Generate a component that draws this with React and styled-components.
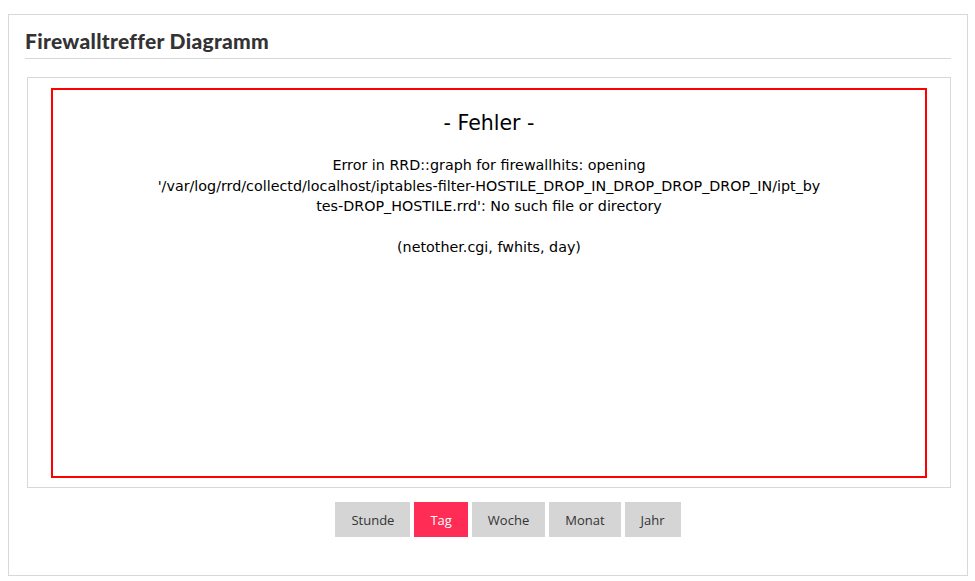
import styled, { createGlobalStyle } from "styled-components"

const ranges = ["Stunde", "Tag", "Woche", "Monat", "Jahr"]

export default function App(){
    const active = "Tag"

    return (
        <>
            <GlobalStyle />
            <Box>
                <Heading>Firewalltreffer Diagramm</Heading>
                <GraphFrame>
                    <ErrorGraph>
                        <ErrorTitle>- Fehler -</ErrorTitle>
                        <ErrorText>
                            Error in RRD::graph for firewallhits: opening<br />
                            '/var/log/rrd/collectd/localhost/iptables-filter-HOSTILE_DROP_IN_DROP_DROP_DROP_IN/ipt_by<br />
                            tes-DROP_HOSTILE.rrd': No such file or directory
                        </ErrorText>
                        <ErrorText>(netother.cgi, fwhits, day)</ErrorText>
                    </ErrorGraph>
                </GraphFrame>
                <RangeList>
                    {ranges.map((r) => (
                        <li key={r}>
                            <RangeButton $active={r === active}>{r}</RangeButton>
                        </li>
                    ))}
                </RangeList>
            </Box>
        </>
    )
}

const GlobalStyle = createGlobalStyle`
    body{
        margin: 0;
        padding: 14px 7px 0 8px;
        background: #fff;
        font-family: "Open Sans", sans-serif;
    }
`

const Box = styled.div`
    box-sizing: border-box;
    width: 960px;
    height: 562px;
    border: 1px solid #d8d8d8;
    padding: 13px 16px 0 16px;
`

const Heading = styled.h2`
    margin: 0 0 18px 0;
    padding-bottom: 4px;
    border-bottom: 1px solid #d8d8d8;
    font-family: "Lato", sans-serif;
    font-weight: 900;
    font-size: 21px;
    letter-spacing: 0.3px;
    line-height: 26px;
    color: #333;
`

const GraphFrame = styled.div`
    box-sizing: border-box;
    margin-left: 2px;
    height: 411px;
    border: 1px solid #d8d8d8;
    padding: 10px 0 0 0;
    display: flex;
    justify-content: center;
`

const ErrorGraph = styled.div`
    box-sizing: border-box;
    width: 876px;
    height: 390px;
    border: 2px solid #ff0000;
    display: flex;
    flex-direction: column;
    align-items: center;
    padding-top: 20px;
    font-family: "DejaVu Sans", sans-serif;
    color: #000;
    text-align: center;
`

const ErrorTitle = styled.div`
    font-size: 20.5px;
    line-height: 26px;
    margin-bottom: 19px;
`

const ErrorText = styled.p`
    margin: 0 0 20px 0;
    font-size: 14.3px;
    line-height: 20.5px;
`

const RangeList = styled.ul`
    list-style: none;
    margin: 14px 0 0 0;
    padding: 0 0 0 40px;
    display: flex;
    justify-content: center;
    gap: 4px;
`

const RangeButton = styled.button`
    height: 35px;
    padding: 0 16px;
    border: none;
    background: ${(p) => (p.$active ? "#ff2d55" : "#d5d5d5")};
    color: ${(p) => (p.$active ? "#fff" : "#333")};
    font-family: "Open Sans", sans-serif;
    font-size: 13px;
    cursor: pointer;
`
